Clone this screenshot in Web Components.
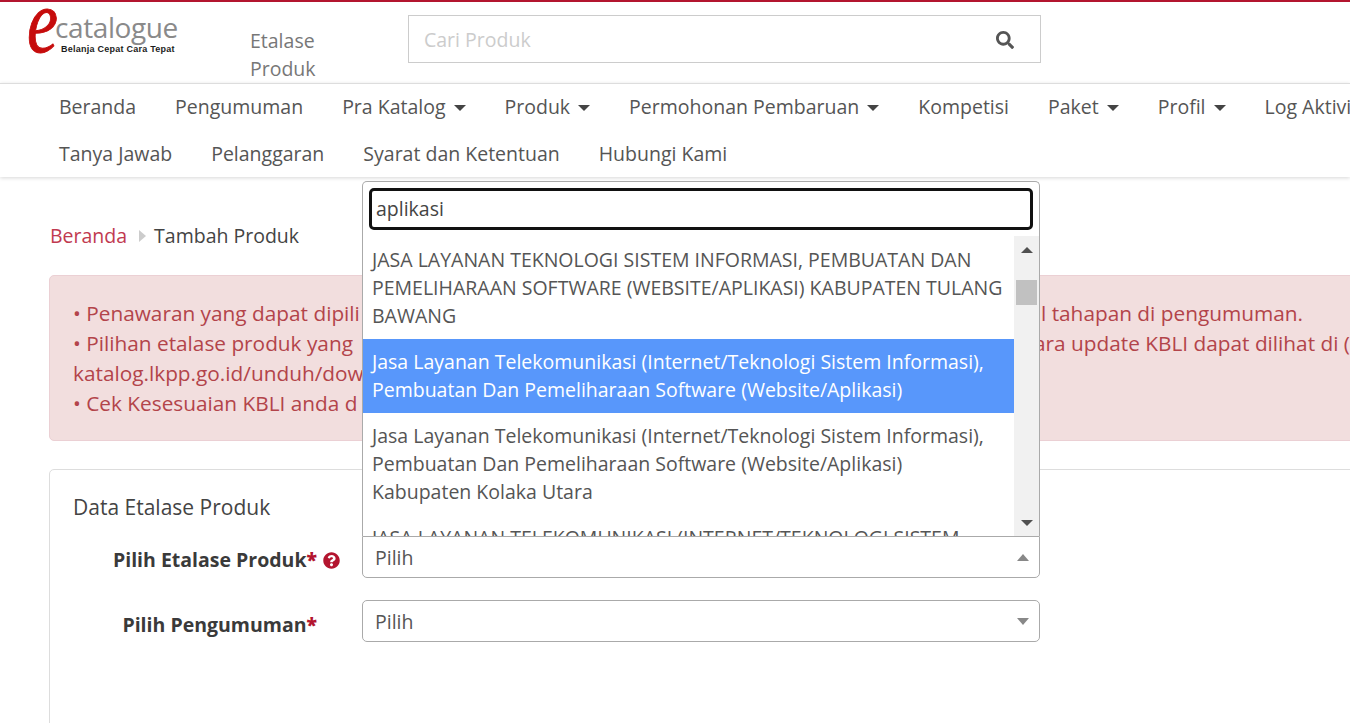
<!DOCTYPE html>
<html lang="id">
<head>
<meta charset="utf-8">
<title>Tambah Produk</title>
<style>
	html, body { margin: 0; height: 723px; overflow: hidden; background: #fff; }
	body { font: 19.5px/28px "Open Sans", "Liberation Sans", sans-serif; color: #444; }
</style>
</head>
<body>
<app-header></app-header>
<nav-bar>
	<nav-item slot="row1">Beranda</nav-item>
	<nav-item slot="row1">Pengumuman</nav-item>
	<nav-item slot="row1" caret>Pra Katalog</nav-item>
	<nav-item slot="row1" caret>Produk</nav-item>
	<nav-item slot="row1" caret>Permohonan Pembaruan</nav-item>
	<nav-item slot="row1">Kompetisi</nav-item>
	<nav-item slot="row1" caret>Paket</nav-item>
	<nav-item slot="row1" caret>Profil</nav-item>
	<nav-item slot="row1">Log Aktivitas</nav-item>
	<nav-item slot="row2">Tanya Jawab</nav-item>
	<nav-item slot="row2">Pelanggaran</nav-item>
	<nav-item slot="row2">Syarat dan Ketentuan</nav-item>
	<nav-item slot="row2">Hubungi Kami</nav-item>
</nav-bar>
<bread-crumb current="Tambah Produk">Beranda</bread-crumb>
<alert-box>
	<alert-line>• Penawaran yang dapat dipili<span slot="after">l tahapan di pengumuman.</span></alert-line>
	<alert-line cut="7">• Pilihan etalase produk yang <span slot="after">ara update KBLI dapat dilihat di (</span></alert-line>
	<alert-line>katalog.lkpp.go.id/unduh/dow</alert-line>
	<alert-line>• Cek Kesesuaian KBLI anda d</alert-line>
</alert-box>
<form-card heading="Data Etalase Produk">
	<form-row label="Pilih Etalase Produk" help>
		<select-box value="Pilih" open search="aplikasi">
			<drop-option>JASA LAYANAN TEKNOLOGI SISTEM INFORMASI, PEMBUATAN DAN PEMELIHARAAN SOFTWARE (WEBSITE/APLIKASI) KABUPATEN TULANG BAWANG</drop-option>
			<drop-option active>Jasa Layanan Telekomunikasi (Internet/Teknologi Sistem Informasi), Pembuatan Dan Pemeliharaan Software (Website/Aplikasi)</drop-option>
			<drop-option>Jasa Layanan Telekomunikasi (Internet/Teknologi Sistem Informasi), Pembuatan Dan Pemeliharaan Software (Website/Aplikasi) Kabupaten Kolaka Utara</drop-option>
			<drop-option>JASA LAYANAN TELEKOMUNIKASI (INTERNET/TEKNOLOGI SISTEM INFORMASI)</drop-option>
		</select-box>
	</form-row>
	<form-row label="Pilih Pengumuman">
		<select-box value="Pilih"></select-box>
	</form-row>
</form-card>

<script>
const SEARCH_ICON = 'M505 442.7L405.3 343c-4.5-4.5-10.6-7-17-7H372c27.6-35.3 44-79.7 44-128C416 93.1 322.9 0 208 0S0 93.1 0 208s93.1 208 208 208c48.3 0 92.7-16.4 128-44v16.3c0 6.4 2.5 12.5 7 17l99.7 99.7c9.4 9.4 24.6 9.4 33.9 0l28.3-28.3c9.4-9.4 9.4-24.6.1-34zM208 336c-70.7 0-128-57.2-128-128 0-70.7 57.2-128 128-128 70.7 0 128 57.2 128 128 0 70.7-57.2 128-128 128z';
const HELP_ICON = 'M504 256c0 136.997-111.043 248-248 248S8 392.997 8 256C8 119.083 119.043 8 256 8s248 111.083 248 248zM262.655 90c-54.497 0-89.255 22.957-116.549 63.758-3.536 5.286-2.353 12.415 2.715 16.258l34.699 26.31c5.205 3.947 12.621 3.008 16.665-2.122 17.864-22.658 30.113-35.797 57.303-35.797 20.429 0 45.698 13.148 45.698 32.958 0 14.976-12.363 22.667-32.534 33.976C247.128 238.528 216 254.941 216 296v4c0 6.627 5.373 12 12 12h56c6.627 0 12-5.373 12-12v-1.333c0-28.462 83.186-29.647 83.186-106.667 0-58.002-60.165-102-116.531-102zM256 338c-25.365 0-46 20.635-46 46 0 25.364 20.635 46 46 46s46-20.636 46-46c0-25.365-20.635-46-46-46z';

/* small helper, every element here is just a shadow root with fixed markup */
class Base extends HTMLElement {
	constructor() {
		super();
		this._root = this.attachShadow({mode: 'open'});
		this._root.innerHTML = this.render();
	}
	render() { return '<slot></slot>'; }
}

class AppHeader extends Base {
	render() {
		return `
			<style>
				:host { display: flex; height: 81px; border-top: 2px solid #b3152f; border-bottom: 1px solid #ddd; }
				.logo { width: 250px; flex: none; padding-left: 27px; box-sizing: border-box; display: flex; align-items: flex-start; }
				.e { font: italic 400 92px/60px "Liberation Serif", serif; color: #c60c0c; -webkit-text-stroke: 1px #c60c0c; margin-top: -11px; width: 28px; flex: none; transform: scaleX(.76); transform-origin: left; }
				.words { display: flex; flex-direction: column; }
				.cat { font: 400 28px/30px "Open Sans", "Liberation Sans", sans-serif; color: #8a8a8a; margin-top: 10px; letter-spacing: -.4px; }
				.tag { font: 700 9px/10px "Liberation Sans", sans-serif; color: #1c1c1c; margin: 2px 0 0 6px; white-space: nowrap; letter-spacing: .25px; }
				.title { width: 158px; flex: none; box-sizing: border-box; padding-right: 70px; color: #777; margin-top: 25px; }
				.search { width: 633px; height: 48px; flex: none; margin-top: 13px; box-sizing: border-box; border: 1px solid #ccc; display: flex; align-items: center; padding: 1px 26px 0 15px; }
				.search span { flex: 1; color: #ccc; }
				svg { width: 18px; height: 18px; fill: #555; }
			</style>
			<div class="logo"><span class="e">e</span><div class="words"><span class="cat">catalogue</span><span class="tag">Belanja Cepat Cara Tepat</span></div></div>
			<div class="title">Etalase Produk</div>
			<div class="search"><span>Cari Produk</span><svg viewBox="0 0 512 512"><path d="${SEARCH_ICON}"/></svg></div>`;
	}
}

class NavBar extends Base {
	render() {
		return `
			<style>
				:host { display: block; position: relative; height: 94px; padding-left: 39.5px; box-shadow: 0 1px 4px rgba(0,0,0,.16); white-space: nowrap; }
				.row { display: flex; height: 47px; align-items: center; margin-top: -1px; margin-bottom: 1px; }
			</style>
			<div class="row"><slot name="row1"></slot></div>
			<div class="row"><slot name="row2"></slot></div>`;
	}
}

class NavItem extends Base {
	render() {
		const caret = this.hasAttribute('caret') ? '<i></i>' : '';
		return `
			<style>
				:host { display: block; padding: 0 19.5px; color: #555; flex: none; }
				i { display: inline-block; width: 0; height: 0; margin-left: 8px; vertical-align: 3px; border: 6px solid transparent; border-top: 6px solid #444; border-bottom: 0; }
			</style>
			<slot></slot>${caret}`;
	}
}

class BreadCrumb extends Base {
	render() {
		return `
			<style>
				:host { display: flex; align-items: center; margin: 45px 0 25px 50px; }
				a { color: #c13a50; }
				i { width: 0; height: 0; margin: 0 8px 0 12px; border: 6px solid transparent; border-left: 7px solid #ccc; border-right: 0; }
				span { color: #444; }
			</style>
			<a><slot></slot></a><i></i><span>${this.getAttribute('current')}</span>`;
	}
}

class AlertBox extends Base {
	render() {
		return `
			<style>
				:host { display: block; width: 1400px; height: 166px; box-sizing: border-box; margin: 0 0 28px 49px; padding: 22px 23px; background: #f2dede; border: 1px solid #ebd0d4; border-radius: 5px; color: #b3444a; font-size: 20.8px; white-space: nowrap; line-height: 30px; }
			</style>
			<slot></slot>`;
	}
}

/* the middle of these lines sits behind the open dropdown, so only the ends are written */
class AlertLine extends Base {
	render() {
		const left = 968 - Number(this.getAttribute('cut') || 0);
		return `
			<style>
				:host { display: flex; height: 30px; }
				.left { width: ${left}px; flex: none; }
			</style>
			<div class="left"><slot></slot></div><slot name="after"></slot>`;
	}
}

class FormCard extends Base {
	render() {
		return `
			<style>
				:host { display: block; width: 1400px; height: 400px; box-sizing: border-box; margin-left: 49px; padding: 23px 23px 0; border: 1px solid #ddd; border-radius: 5px; }
				h3 { font: inherit; font-size: 21px; margin: 0 0 15px; color: #444; }
			</style>
			<h3>${this.getAttribute('heading')}</h3>
			<slot></slot>`;
	}
}

class FormRow extends Base {
	render() {
		const help = this.hasAttribute('help');
		return `
			<style>
				:host { display: flex; align-items: center; margin-bottom: 22px; margin-left: -23px; }
				.label { width: 312px; flex: none; display: flex; justify-content: flex-end; align-items: center; font-weight: 700; color: #3a3a3a; padding: ${help ? 6 : 8}px ${help ? 22 : 45}px 0 0; box-sizing: border-box; }
				b { color: #b3152f; }
				svg { width: 17px; height: 17px; fill: #b3152f; margin-left: 6px; }
			</style>
			<div class="label">${this.getAttribute('label')}<b>*</b>${help ? `<svg viewBox="0 0 512 512"><path d="${HELP_ICON}"/></svg>` : ''}</div>
			<slot></slot>`;
	}
}

class SelectBox extends Base {
	render() {
		const open = this.hasAttribute('open');
		const drop = !open ? '' : `
			<div class="drop">
				<div class="search">${this.getAttribute('search')}</div>
				<div class="results">
					<div class="list"><slot></slot></div>
					<div class="bar"><i class="up"></i><div class="track"><div class="thumb"></div></div><i class="down"></i></div>
				</div>
			</div>`;
		return `
			<style>
				:host { display: block; position: relative; width: 678px; height: 42px; flex: none; color: #555; }
				.box { height: 42px; box-sizing: border-box; border: 1px solid #aaa; border-radius: ${open ? '0 0 5px 5px' : '5px'}; display: flex; align-items: center; justify-content: space-between; padding: 1px 10px 0 12px; }
				.arrow { width: 0; height: 0; border: 6px solid transparent; border-top: 7px solid #888; border-bottom: 0; }
				.arrow.up { border-top: 0; border-bottom: 7px solid #888; }
				.drop { position: absolute; left: 0; right: 0; bottom: 100%; height: 355px; box-sizing: border-box; background: #fff; border: 1px solid #aaa; border-bottom: 0; border-radius: 5px 5px 0 0; padding-top: 6px; z-index: 5; }
				.search { height: 42px; box-sizing: border-box; margin: 0 6px 6px; padding: 0 4px; border: 3px solid #111; border-radius: 5px; line-height: 36px; color: #444; }
				.results { display: flex; height: 300px; overflow: hidden; }
				.list { flex: 1; min-width: 0; padding-top: 1px; }
				.bar { width: 25px; flex: none; background: #f1f1f1; display: flex; flex-direction: column; align-items: center; }
				.track { flex: 1; width: 100%; padding-top: 18px; box-sizing: border-box; }
				.thumb { height: 25px; margin: 0 2px; background: #c1c1c1; }
				.bar i { width: 0; height: 0; border: 6px solid transparent; margin: 11px 0 9px; }
				.bar .up { border-top: 0; border-bottom: 6px solid #505050; }
				.bar .down { border-bottom: 0; border-top: 6px solid #505050; margin-top: 8px; margin-bottom: 10px; }
			</style>
			${drop}
			<div class="box"><span>${this.getAttribute('value')}</span><i class="arrow${open ? ' up' : ''}"></i></div>`;
	}
}

class DropOption extends Base {
	render() {
		const active = this.hasAttribute('active');
		return `
			<style>
				:host { display: block; padding: 9px; color: ${active ? '#fff' : '#555'}; background: ${active ? '#5897fb' : 'transparent'}; }
			</style>
			<slot></slot>`;
	}
}

customElements.define('app-header', AppHeader);
customElements.define('nav-bar', NavBar);
customElements.define('nav-item', NavItem);
customElements.define('bread-crumb', BreadCrumb);
customElements.define('alert-box', AlertBox);
customElements.define('alert-line', AlertLine);
customElements.define('form-card', FormCard);
customElements.define('form-row', FormRow);
customElements.define('select-box', SelectBox);
customElements.define('drop-option', DropOption);
</script>
</body>
</html>
